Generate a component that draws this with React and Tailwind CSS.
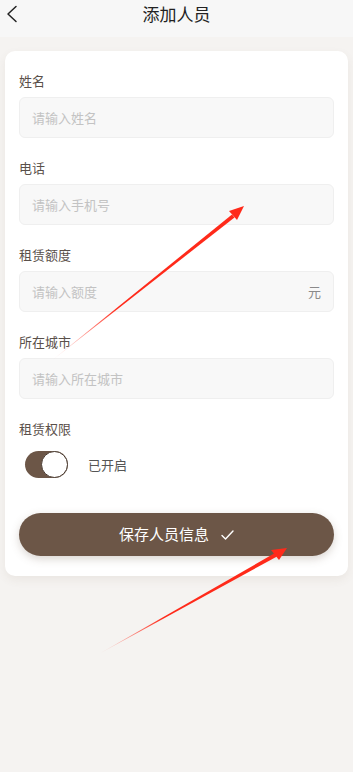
import React from "react";

function Field({ label, placeholder, suffix }) {
  return (
    <div className="flex flex-col">
      <div className="h-[18px] text-[13px] leading-[18px] text-[#5a504a]">{label}</div>
      <div className="mt-[7px] flex h-[41px] items-center justify-between rounded-[6px] border border-[#efefef] bg-[#f8f8f8] pl-[12px] pr-[12px]">
        <span className="text-[13px] text-[#c3c3c3]">{placeholder}</span>
        {suffix && <span className="text-[13px] text-[#8a8a8a]">{suffix}</span>}
      </div>
    </div>
  );
}

export default function App() {
  return (
    <div
      className="relative h-[772px] w-[353px] overflow-hidden bg-[#f5f3f1]"
      style={{ fontFamily: '"Noto Sans CJK SC", "Noto Sans", sans-serif' }}
    >
      <div className="relative flex h-[37px] items-start justify-center bg-[#f7f7f7]">
        <svg className="absolute left-[5px] top-[5px]" width="14" height="18" viewBox="0 0 14 18" fill="none">
          <path d="M11 1.5 L3 9 L11 16.5" stroke="#222" strokeWidth="1.5" strokeLinecap="round" strokeLinejoin="round" />
        </svg>
        <span className="pt-[2px] text-[17px] leading-[24px] text-[#222]">添加人员</span>
      </div>

      <div className="mx-[5px] mt-[14px] flex flex-col rounded-[10px] bg-white px-[14px] pb-[20px] pt-[21px] shadow-[0_4px_10px_rgba(120,90,70,0.08)]">
        <div className="flex flex-col gap-[21px]">
          <Field label="姓名" placeholder="请输入姓名" />
          <Field label="电话" placeholder="请输入手机号" />
          <Field label="租赁额度" placeholder="请输入额度" suffix="元" />
          <Field label="所在城市" placeholder="请输入所在城市" />
          <div className="flex flex-col">
            <div className="h-[18px] text-[13px] leading-[18px] text-[#5a504a]">租赁权限</div>
            <div className="ml-[6px] mt-[13px] flex items-center">
              <div className="flex h-[27px] w-[43px] items-center justify-end rounded-full bg-[#6c5647]">
                <div className="h-[27px] w-[27px] rounded-full border border-[#4a3b31] bg-white" />
              </div>
              <span className="ml-[20px] text-[13px] text-[#555]">已开启</span>
            </div>
          </div>
        </div>
        <button className="mt-[35px] flex h-[43px] w-full items-center justify-center rounded-full bg-[#6c5647] text-[15px] text-white shadow-[0_3px_8px_rgba(108,86,71,0.25)]">
          <span>保存人员信息</span>
          <svg className="ml-[12px]" width="13" height="10" viewBox="0 0 13 10" fill="none">
            <path d="M1 5.5 L4.5 9 L12 1" stroke="white" strokeWidth="1.4" strokeLinecap="round" strokeLinejoin="round" />
          </svg>
        </button>
      </div>

      <svg className="pointer-events-none absolute left-0 top-0" width="353" height="772" viewBox="0 0 353 772">
        <defs>
          <linearGradient id="g1" x1="50" y1="362" x2="244" y2="206" gradientUnits="userSpaceOnUse">
            <stop offset="0" stopColor="#ff2a1a" stopOpacity="0" />
            <stop offset="0.35" stopColor="#ff2a1a" stopOpacity="1" />
            <stop offset="1" stopColor="#ff2a1a" />
          </linearGradient>
          <linearGradient id="g2" x1="97" y1="655" x2="287" y2="548" gradientUnits="userSpaceOnUse">
            <stop offset="0" stopColor="#ff2a1a" stopOpacity="0" />
            <stop offset="0.35" stopColor="#ff2a1a" stopOpacity="1" />
            <stop offset="1" stopColor="#ff2a1a" />
          </linearGradient>
        </defs>
        <polygon points="50,362 232,214.5 234.5,217.5" fill="url(#g1)" />
        <polygon points="244,206 229,211 237,220" fill="#ff2a1a" />
        <polygon points="97,655 275,553 277,556.5" fill="url(#g2)" />
        <polygon points="287,548 271,550 279,560" fill="#ff2a1a" />
      </svg>
    </div>
  );
}
